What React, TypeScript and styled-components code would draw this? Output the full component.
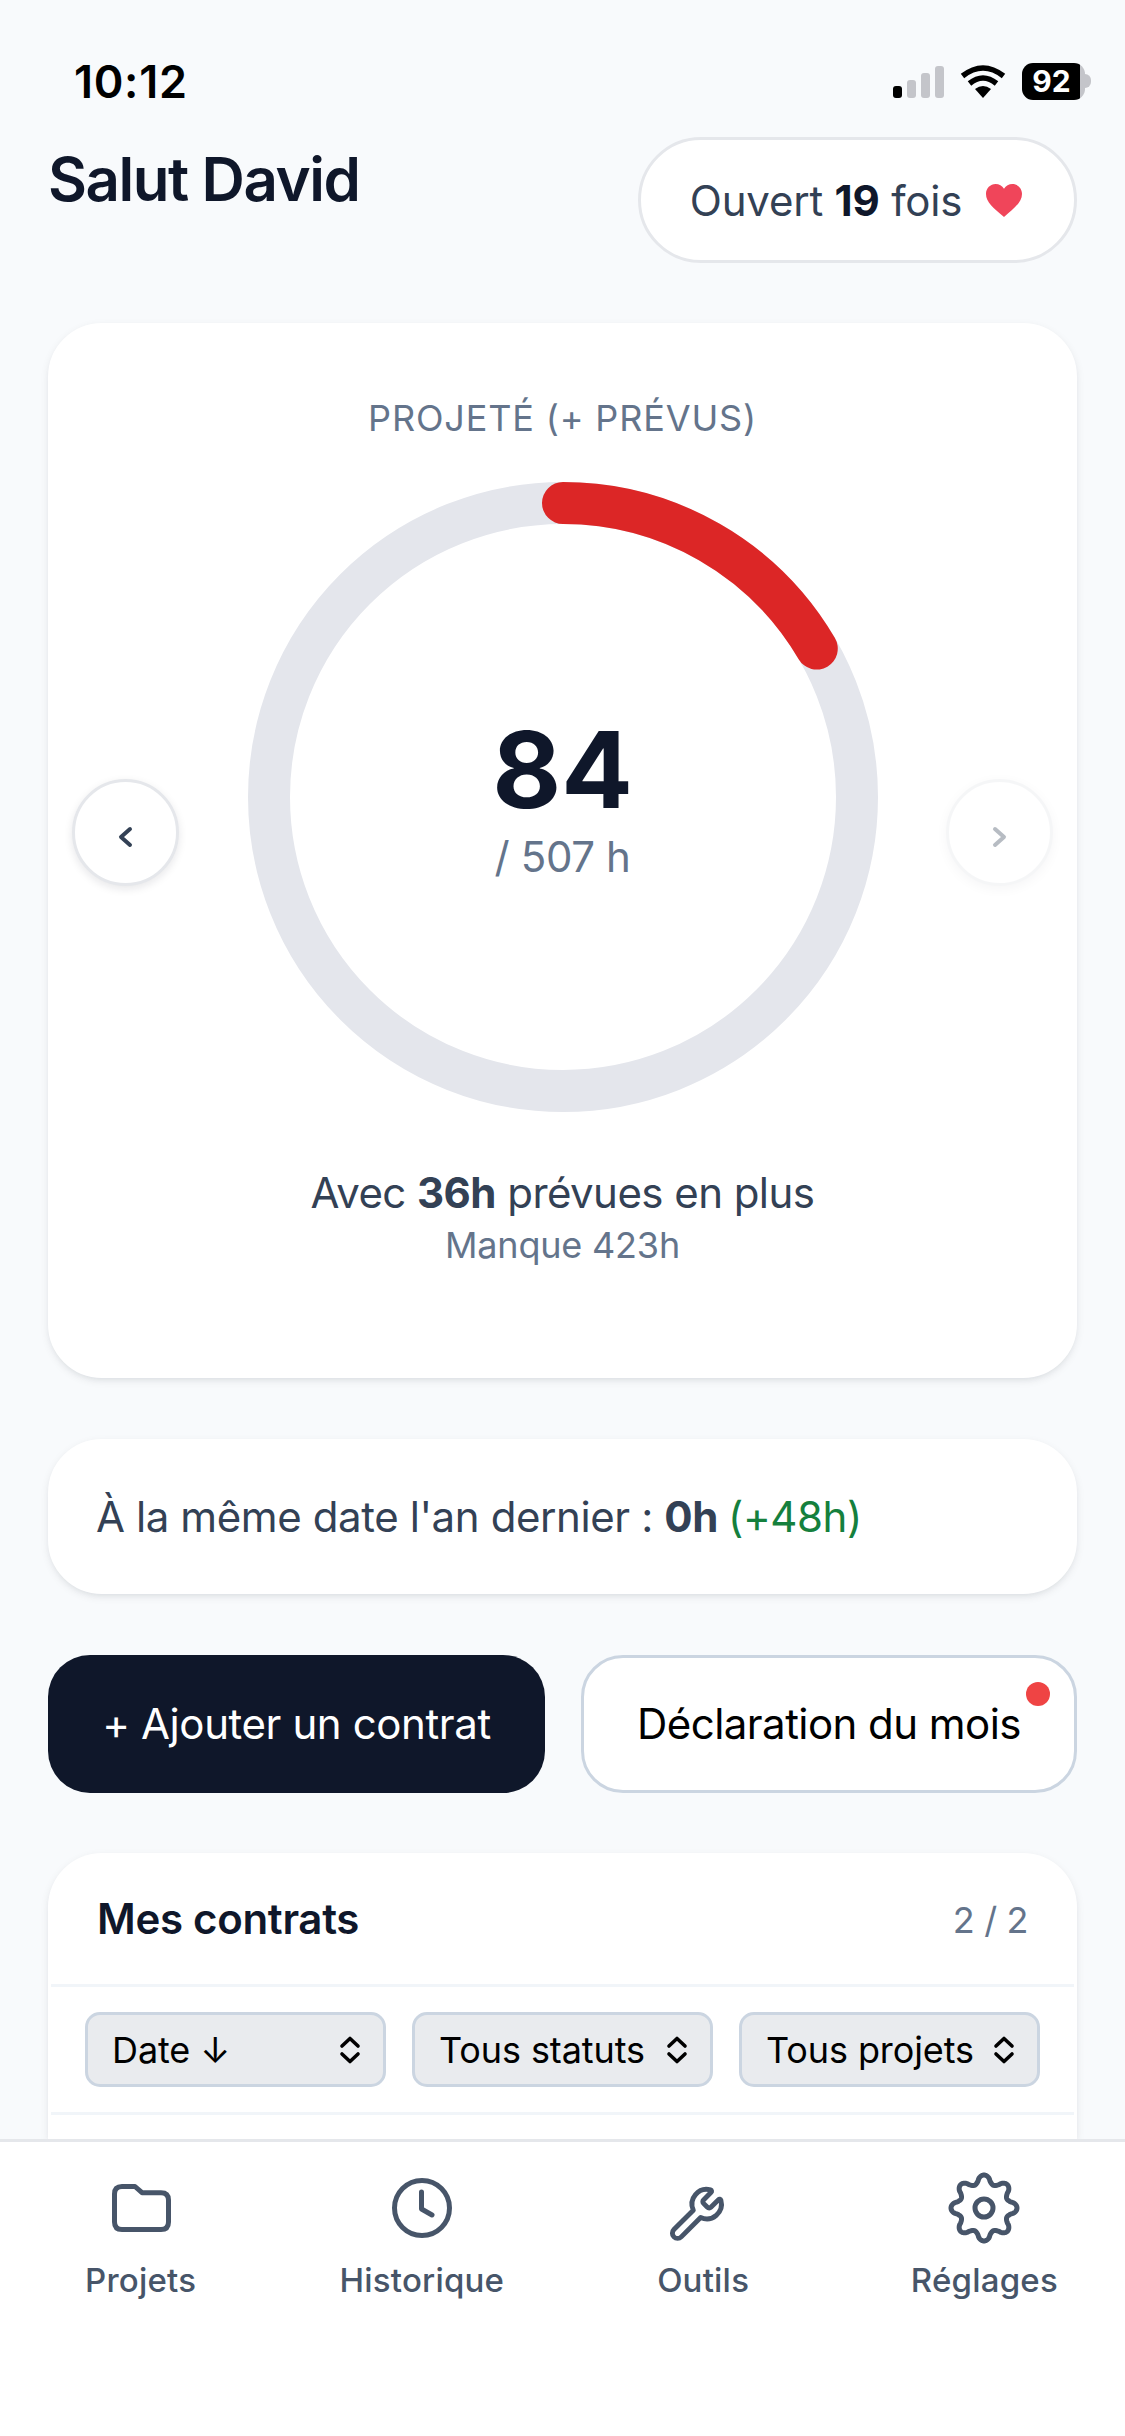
import React from "react";
import styled, { createGlobalStyle } from "styled-components";

const Global = createGlobalStyle`
  html, body { margin: 0; padding: 0; background: #f8fafc; }
  * { box-sizing: border-box; }
  body { font-family: Inter, "Noto Sans", sans-serif; }
`;

const Screen = styled.div`
  width: 1125px;
  height: 2436px;
  display: flex;
  flex-direction: column;
  overflow: hidden;
  background: #f8fafc;
`;
const Scroll = styled.main`
  flex: 1;
  min-height: 0;
  overflow: hidden;
  display: flex;
  flex-direction: column;
  padding: 0 48px;
`;
const StatusBar = styled.div`
  height: 137px;
  flex: none;
  margin: 0 -48px;
  padding: 60px 34px 0 74px;
  display: flex;
  justify-content: space-between;
  align-items: flex-start;
`;
const Time = styled.span`
  font-size: 45px;
  font-weight: 600;
  line-height: 44px;
  color: #000;
  letter-spacing: 0.7px;
`;
const StatusIcons = styled.div`
  display: flex;
  align-items: center;
  gap: 16px;
  margin-top: 3px;
`;
const Battery = styled.div`
  position: relative;
  width: 63px;
  height: 37px;
  border-radius: 11px;
  background: linear-gradient(90deg, #000 0 92%, #c4c5ca 92%);
  color: #fff;
  font-size: 30px;
  font-weight: 700;
  line-height: 37px;
  text-align: center;
  padding-right: 4px;
  margin-right: 6px;
  &::after {
    content: "";
    position: absolute;
    right: -6px;
    top: 11px;
    width: 6px;
    height: 14px;
    border-radius: 0 7px 7px 0;
    background: #c4c5ca;
  }
`;
const Header = styled.header`
  flex: none;
  display: flex;
  justify-content: space-between;
  align-items: flex-start;
  margin-bottom: 60px;
`;
const Title = styled.h1`
  margin: 0;
  font-size: 60px;
  line-height: 84px;
  font-weight: 600;
  color: #0f172a;
  letter-spacing: -1.45px;
`;
const Pill = styled.div`
  width: 439px;
  height: 126px;
  display: flex;
  align-items: center;
  justify-content: center;
  gap: 24px;
  padding-right: 3px;
  background: #fff;
  border: 3px solid #e5e7eb;
  border-radius: 63px;
  font-size: 42px;
  letter-spacing: -0.2px;
  color: #334155;
  b { font-weight: 700; color: #0f172a; }
`;
const Card = styled.section`
  flex: none;
  position: relative;
  background: #fff;
  border: 3px solid #fff;
  border-radius: 54px;
  box-shadow: 0 3px 9px rgba(15, 23, 42, 0.08), 0 3px 6px -3px rgba(15, 23, 42, 0.08);
`;
const GaugeCard = styled(Card)`
  display: flex;
  flex-direction: column;
  align-items: center;
  padding: 68px 0 109px;
  margin-bottom: 61px;
`;
const GaugeLabel = styled.div`
  font-size: 36px;
  line-height: 48px;
  letter-spacing: 0.85px;
  color: #64748b;
  margin-bottom: 40px;
`;
const Ring = styled.div`
  position: relative;
  width: 630px;
  height: 630px;
  margin-bottom: 49px;
  svg { display: block; }
`;
const RingCenter = styled.div`
  position: absolute;
  inset: 0;
  display: flex;
  flex-direction: column;
  align-items: center;
  justify-content: center;
`;
const RingValue = styled.div`
  font-size: 106px;
  line-height: 108px;
  font-weight: 700;
  color: #0f172a;
  margin-top: 8px;
`;
const RingTotal = styled.div`
  font-size: 42px;
  line-height: 60px;
  letter-spacing: -0.4px;
  color: #64748b;
  margin-top: 3px;
`;
const NavButton = styled.button<{ $side: "left" | "right"; $off?: boolean }>`
  position: absolute;
  top: 453px;
  ${(p) => p.$side}: 21px;
  width: 107px;
  height: 107px;
  padding: 8px 0 0;
  display: flex;
  align-items: center;
  justify-content: center;
  border-radius: 50%;
  background: #fff;
  border: 3px solid #e5e7eb;
  box-shadow: 0 3px 9px rgba(15, 23, 42, 0.1);
  color: #334155;
  opacity: ${(p) => (p.$off ? 0.35 : 1)};
`;
const Caption = styled.div`
  font-size: 42px;
  line-height: 63px;
  letter-spacing: -0.55px;
  color: #334155;
  b { font-weight: 700; }
`;
const SubCaption = styled.div`
  font-size: 36px;
  line-height: 42px;
  letter-spacing: -0.2px;
  color: #64748b;
`;
const CompareCard = styled(Card)`
  height: 155px;
  display: flex;
  align-items: center;
  padding: 0 45px;
  font-size: 42px;
  letter-spacing: -0.4px;
  color: #334155;
  margin-bottom: 61px;
  b { font-weight: 700; margin: 0 10px 0 0; }
`;
const Green = styled.span`
  color: #15803d;
`;
const Actions = styled.div`
  flex: none;
  display: grid;
  grid-template-columns: 497px 496px;
  gap: 36px;
  margin-bottom: 60px;
`;
const ActionButton = styled.button<{ $primary?: boolean }>`
  position: relative;
  height: 138px;
  padding: 0 0 2px;
  border-radius: 42px;
  font-family: inherit;
  font-size: 42px;
  font-weight: 400;
  letter-spacing: ${(p) => (p.$primary ? "-0.4px" : "-0.55px")};
  color: ${(p) => (p.$primary ? "#fff" : "#000")};
  background: ${(p) => (p.$primary ? "#0f172a" : "#fff")};
  border: ${(p) => (p.$primary ? "none" : "3px solid #cbd5e1")};
`;
const Dot = styled.span`
  position: absolute;
  top: 24px;
  right: 24px;
  width: 24px;
  height: 24px;
  border-radius: 50%;
  background: #ef4444;
`;
const ContractsCard = styled(Card)`
  flex: 1;
  border-bottom: none;
  border-radius: 54px 54px 0 0;
`;
const ContractsHead = styled.div`
  height: 131px;
  display: flex;
  align-items: center;
  justify-content: space-between;
  padding: 0 46px;
  border-bottom: 3px solid #f1f5f9;
`;
const ContractsTitle = styled.h2`
  margin: 0 0 3px;
  font-size: 42px;
  font-weight: 600;
  letter-spacing: -0.3px;
  color: #0f172a;
`;
const Count = styled.span`
  font-size: 36px;
  letter-spacing: -0.4px;
  color: #64748b;
`;
const Filters = styled.div`
  display: grid;
  grid-template-columns: repeat(3, 301px);
  gap: 26px;
  padding: 25px 34px;
  border-bottom: 3px solid #f1f5f9;
`;
const Select = styled.div`
  height: 75px;
  display: flex;
  align-items: center;
  justify-content: space-between;
  padding: 0 22px 0 24px;
  border: 3px solid #cbd5e1;
  border-radius: 15px;
  background: #e9ebee;
  font-size: 36px;
  letter-spacing: -0.1px;
  white-space: nowrap;
  color: #000;
`;
const TabBar = styled.nav`
  flex: none;
  height: 297px;
  display: grid;
  grid-template-columns: repeat(4, 1fr);
  align-items: start;
  padding-top: 30px;
  background: #fff;
  border-top: 3px solid #e5e7eb;
`;
const Tab = styled.div`
  display: flex;
  flex-direction: column;
  align-items: center;
  color: #475569;
  font-size: 33px;
  line-height: 42px;
  font-weight: 500;
  letter-spacing: 0.2px;
  gap: 15px;
`;
const TabIcon = styled.svg.attrs({ width: 72, height: 72, viewBox: "0 0 72 72" })`
  display: block;
  fill: none;
  stroke: currentColor;
  stroke-width: 5;
  stroke-linecap: round;
  stroke-linejoin: round;
  overflow: visible;
`;

const Signal = () => (
  <svg width="51" height="32" viewBox="0 0 51 32">
    <rect x="0" y="20" width="9" height="12" rx="3" fill="#000" />
    <rect x="14" y="14" width="9" height="18" rx="3" fill="#c4c5ca" />
    <rect x="28" y="7" width="9" height="25" rx="3" fill="#c4c5ca" />
    <rect x="42" y="0" width="9" height="32" rx="3" fill="#c4c5ca" />
  </svg>
);
const Wifi = () => (
  <svg width="46" height="33" viewBox="0 0 46 33">
    <path d="M23 33 L15 24 Q23 18 31 24 Z" fill="#000" />
    <path d="M9.5 18.5 Q23 7.5 36.5 18.5" fill="none" stroke="#000" strokeWidth="5.5" />
    <path d="M2.5 11 Q23 -5 43.5 11" fill="none" stroke="#000" strokeWidth="5.5" />
  </svg>
);
const Heart = () => (
  <svg width="36" height="33" viewBox="0 0 24 22" preserveAspectRatio="none">
    <path
      d="M12 22 C5 16 0 12 0 6.6 C0 2.8 2.9 0 6.4 0 C8.7 0 10.8 1.2 12 3.2 C13.2 1.2 15.3 0 17.6 0 C21.1 0 24 2.8 24 6.6 C24 12 19 16 12 22 Z"
      fill="#f0455a"
    />
  </svg>
);
const Chevron = ({ left }: { left?: boolean }) => (
  <svg width="15" height="22" viewBox="0 0 15 22">
    <path
      d={left ? "M12 3 L3 11 L12 19" : "M3 3 L12 11 L3 19"}
      fill="none"
      stroke="currentColor"
      strokeWidth="4"
      strokeLinecap="round"
      strokeLinejoin="round"
    />
  </svg>
);
const UpDown = () => (
  <svg width="22" height="30" viewBox="0 0 22 30">
    <path d="M3 11 L11 3.5 L19 11 M3 19 L11 26.5 L19 19" fill="none" stroke="#000" strokeWidth="3.6" strokeLinecap="round" strokeLinejoin="round" />
  </svg>
);

const FolderIcon = () => (
  <TabIcon>
    <path d="M17 14.5 H30 L37 20.7 H56 Q63.5 20.7 63.5 28 V50 Q63.5 57.5 56 57.5 H17 Q9.5 57.5 9.5 50 V22 Q9.5 14.5 17 14.5 Z" />
  </TabIcon>
);
const ClockIcon = () => (
  <TabIcon>
    <circle cx="36" cy="36" r="27.5" />
    <path d="M35.5 20 V37 L46 43" />
  </TabIcon>
);
const WrenchIcon = () => (
  <TabIcon>
    <g transform="translate(0.5 12.5) scale(2.45)" strokeWidth="2">
      <path d="M14.7 6.3a1 1 0 0 0 0 1.4l1.6 1.6a1 1 0 0 0 1.4 0l3.106-3.105c.32-.322.863-.22.983.218a6 6 0 0 1-8.259 7.057l-7.91 7.91a1 1 0 0 1-2.999-3l7.91-7.91a6 6 0 0 1 7.057-8.259c.438.12.54.662.219.984z" />
    </g>
  </TabIcon>
);

const gearPath = (() => {
  const pts: string[] = [];
  for (let i = 0; i < 240; i++) {
    const a = (i / 240) * Math.PI * 2;
    const c = Math.cos(8 * a);
    const r = 28.8 + 4.2 * Math.sign(c) * Math.pow(Math.abs(c), 0.75);
    pts.push(`${(36 + r * Math.sin(a)).toFixed(2)} ${(36 - r * Math.cos(a)).toFixed(2)}`);
  }
  return `M${pts.join(" L")} Z`;
})();
const GearIcon = () => (
  <TabIcon>
    <path d={gearPath} />
    <circle cx="36" cy="36" r="9" />
  </TabIcon>
);

const R = 294;
const C = 2 * Math.PI * R;

export default function App() {
  const pct = 84 / 507;
  return (
    <Screen>
      <Global />
      <Scroll>
        <StatusBar>
          <Time>10:12</Time>
          <StatusIcons>
            <Signal />
            <Wifi />
            <Battery>92</Battery>
          </StatusIcons>
        </StatusBar>
        <Header>
          <Title>Salut David</Title>
          <Pill>
            <span>
              Ouvert <b>19</b> fois
            </span>
            <Heart />
          </Pill>
        </Header>
        <GaugeCard>
          <GaugeLabel>PROJETÉ (+ PRÉVUS)</GaugeLabel>
          <Ring>
            <svg width="630" height="630" viewBox="0 0 630 630">
              <circle cx="315" cy="315" r={R} fill="none" stroke="#e4e6ec" strokeWidth="42" />
              <circle
                cx="315"
                cy="315"
                r={R}
                fill="none"
                stroke="#dc2626"
                strokeWidth="42"
                strokeLinecap="round"
                strokeDasharray={`${C * pct} ${C}`}
                transform="rotate(-90 315 315)"
              />
            </svg>
            <RingCenter>
              <RingValue>84</RingValue>
              <RingTotal>/ 507 h</RingTotal>
            </RingCenter>
          </Ring>
          <Caption>
            Avec <b>36h</b> prévues en plus
          </Caption>
          <SubCaption>Manque 423h</SubCaption>
          <NavButton $side="left">
            <Chevron left />
          </NavButton>
          <NavButton $side="right" $off>
            <Chevron />
          </NavButton>
        </GaugeCard>
        <CompareCard>
          <span>
            À la même date l'an dernier : <b>0h</b>
            <Green>(+48h)</Green>
          </span>
        </CompareCard>
        <Actions>
          <ActionButton $primary>+ Ajouter un contrat</ActionButton>
          <ActionButton>
            Déclaration du mois
            <Dot />
          </ActionButton>
        </Actions>
        <ContractsCard>
          <ContractsHead>
            <ContractsTitle>Mes contrats</ContractsTitle>
            <Count>2 / 2</Count>
          </ContractsHead>
          <Filters>
            <Select>
              Date ↓
              <UpDown />
            </Select>
            <Select>
              Tous statuts
              <UpDown />
            </Select>
            <Select>
              Tous projets
              <UpDown />
            </Select>
          </Filters>
        </ContractsCard>
      </Scroll>
      <TabBar>
        <Tab>
          <FolderIcon />
          Projets
        </Tab>
        <Tab>
          <ClockIcon />
          Historique
        </Tab>
        <Tab>
          <WrenchIcon />
          Outils
        </Tab>
        <Tab>
          <GearIcon />
          Réglages
        </Tab>
      </TabBar>
    </Screen>
  );
}
